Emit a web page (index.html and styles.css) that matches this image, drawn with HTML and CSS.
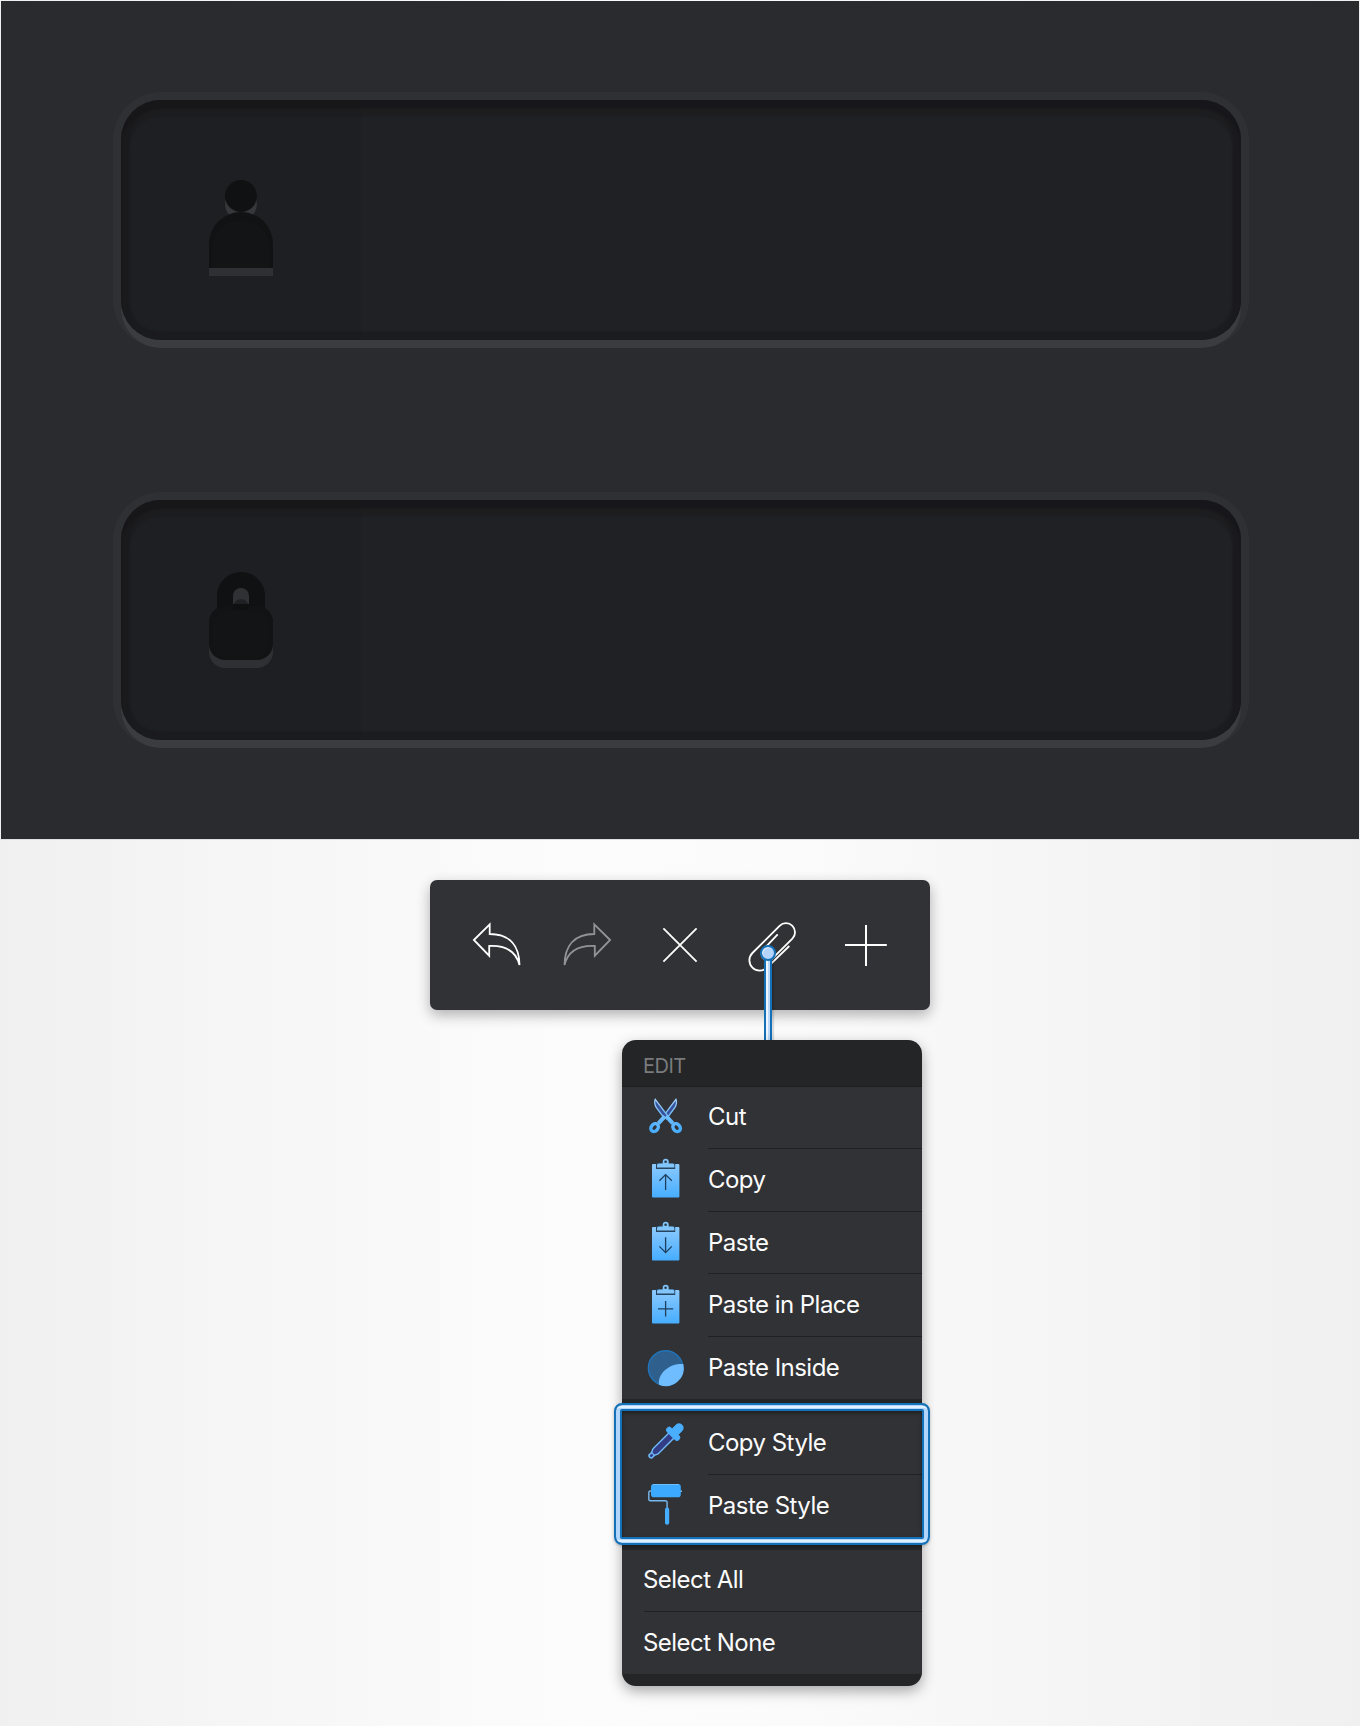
FILE: index.html
```html
<!DOCTYPE html>
<html lang="en">
<head>
<meta charset="utf-8">
<title>Edit menu</title>
<link rel="stylesheet" href="styles.css">
</head>
<body>
<svg class="defs" width="0" height="0" aria-hidden="true">
  <defs>
    <linearGradient id="sky" x1="0" y1="0" x2="0" y2="1"><stop offset="0" stop-color="#8ccaff"/><stop offset="1" stop-color="#46adff"/></linearGradient>
    <linearGradient id="cutfill" gradientUnits="userSpaceOnUse" x1="0" y1="11" x2="0" y2="46"><stop offset="0" stop-color="#a5d2fb"/><stop offset="1" stop-color="#43acff"/></linearGradient>
    <symbol id="board" viewBox="0 0 40 62">
      <rect x="6" y="15" width="27.4" height="33.6" rx="1" fill="url(#sky)"/>
      <path d="M10 14h19.2v6H10z" fill="#26445f"/>
      <path d="M11 18.6v-2.4q0-1.7 1.7-1.7h4v-1.7a3 3 0 0 1 6 0v1.7h4q1.7 0 1.7 1.7v2.4z" fill="#82c5fb"/>
      <circle cx="19.6" cy="12.8" r="1.3" fill="#26384a"/>
    </symbol>
  </defs>
</svg>
<main class="page">
  <section class="panel">
    <div class="field">
      <div class="field-icon">
        <svg width="80" height="240" viewBox="0 0 80 240">
          <circle cx="40" cy="104" r="16" fill="#36373a"/>
          <path d="M8 176v-28a32 32 0 0 1 64 0v28z" fill="#2f3033"/>
          <circle cx="40" cy="96" r="16" fill="#101113"/>
          <path d="M8 168v-24a32 32 0 0 1 64 0v24z" fill="#111214"/>
          <path d="M11 168v-21a29 27 0 0 1 58 0v21z" fill="#131416"/>
        </svg>
      </div>
    </div>
    <div class="field">
      <div class="field-icon">
        <svg width="80" height="240" viewBox="0 0 80 240">
          <rect x="8" y="114" width="64" height="54" rx="16" fill="#2f3033"/>
          <path d="M16 112V96a24 24 0 0 1 48 0v16z" fill="#101113"/>
          <rect x="8" y="106" width="64" height="54" rx="16" fill="#121315"/>
          <rect x="12" y="111" width="56" height="47" rx="14" fill="#131416"/>
          <path d="M32 104v-8a8 8 0 0 1 16 0v8z" fill="#303134"/>
          <path d="M33 104a7.5 7.5 0 0 1 14 0z" fill="#1f2023"/>
          <path d="M32 104h16v6H32z" fill="#0f1012"/>
        </svg>
      </div>
    </div>
  </section>

  <section class="stage">
    <div class="toolbar">
      <svg width="48" height="50" viewBox="0 0 48 50"><path d="M.9 20 16.7 4.3V14C37 14 46.2 26 46.5 45 43 31 33 25.2 16.2 26v9.7z"/></svg>
      <svg class="muted" width="48" height="50" viewBox="0 0 48 50"><path d="M47.1 20 31.3 4.3V14C11 14 1.8 26 1.5 45 5 31 15 25.2 31.8 26v9.7z"/></svg>
      <svg width="48" height="50" viewBox="0 0 48 50"><path d="m7.4 8.4 33.2 33.2M40.6 8.4 7.4 41.6"/></svg>
      <svg width="48" height="50" viewBox="0 0 48 50"><path d="M41.3 26 19 47.6A10.3 10.3 0 0 1 4.4 33L31.6 5.8a9 9 0 0 1 12.8 12.8L24 38.8a6.4 6.4 0 0 1-9-9L29.7 14.3"/></svg>
      <svg width="48" height="50" viewBox="0 0 48 50"><path class="plus" d="M24 5v41M3 25h41.8"/></svg>
      <div class="pointer"></div>
    </div>

    <div class="menu">
      <div class="menu-title">EDIT</div>
      <div class="group">
        <div class="item first">
          <svg width="40" height="62" viewBox="0 0 40 62" fill="none" stroke="url(#cutfill)">
            <path d="M30 12.4q1.5 3.6-1.2 8.2L20.6 31.6l-2.8-3.2z" fill="#37539b" stroke-width="1.3"/>
            <path d="M9.2 12.4q-1.5 3.6 1.2 8.2l8.2 11 2.8-3.2z" fill="#37539b" stroke-width="1.3"/>
            <path d="m18.8 29.4-6.4 7m8-7 6.4 7" stroke-width="4"/>
            <ellipse cx="8.6" cy="40.6" rx="3.3" ry="4.3" transform="rotate(42 8.6 40.6)" stroke-width="3.4"/>
            <ellipse cx="30.6" cy="40.6" rx="3.3" ry="4.3" transform="rotate(-42 30.6 40.6)" stroke-width="3.4"/>
          </svg><span>Cut</span>
        </div>
        <div class="item tall">
          <svg width="40" height="62" viewBox="0 0 40 62"><use href="#board"/><path class="mark" d="M19.6 41V25.8M13.4 31.8l6.2-6.2 6.2 6.2"/></svg><span>Copy</span>
        </div>
        <div class="item">
          <svg width="40" height="62" viewBox="0 0 40 62"><use href="#board"/><path class="mark" d="M19.6 25.3v15.2M13.4 34.4l6.2 6.2 6.2-6.2"/></svg><span>Paste</span>
        </div>
        <div class="item tall">
          <svg width="40" height="63" viewBox="0 -.5 40 62"><use href="#board" width="40" height="62"/><path class="mark" d="M19.6 26v15.6M12 33.8h15.2"/></svg><span>Paste in Place</span>
        </div>
        <div class="item last">
          <svg width="40" height="62" viewBox="0 0 40 62">
            <circle cx="19.6" cy="31" r="17.2" fill="#2f5f8c" stroke="#2273b7" stroke-width="1.5"/>
            <path d="M37.4 27.2A18 18 0 0 1 13 47.7C11 37 24 25.5 37.4 27.2z" fill="#6fbcff"/>
          </svg><span>Paste Inside</span>
        </div>
      </div>
      <div class="group spaced">
        <div class="item taller">
          <svg width="40" height="62" viewBox="0 0 40 62">
            <g transform="translate(19.2 30.7) rotate(45)">
              <path d="M-3.6-9.5h7.2v23.2L2 17.3V21q-2 2-4 0v-3.7l-1.6-3.6z" fill="#323d86" stroke="#6fb9f8" stroke-width="1.5"/>
              <path d="M-2 17.3h4" stroke="#6fb9f8" stroke-width="1.3"/>
              <path d="M-3.4-8.3h-2a2.9 2.9 0 0 1 0-5.8h1.2v-5.4a4.2 4.2 0 0 1 8.4 0v5.4h1.2a2.9 2.9 0 0 1 0 5.8z" fill="#4aaeff" stroke="#4aaeff" stroke-width=".8"/>
            </g>
          </svg><span>Copy Style</span>
        </div>
        <div class="item last">
          <svg width="40" height="62" viewBox="0 0 40 62">
            <path d="M5 16H4.3Q2.8 16 2.8 17.5v6.4q0 1.8 1.8 1.8h14.6q1.9 0 1.9 1.9V33M34 16.2h2" fill="none" stroke="#79b8ed" stroke-width="1.4"/>
            <rect x="5" y="9" width="29.8" height="13.2" rx="2.8" fill="#3baaff"/>
            <path d="M7 9.5h26" stroke="#6cbfff"/>
            <rect x="19" y="32.4" width="4.2" height="17.4" rx="2.1" fill="#45adff"/>
          </svg><span>Paste Style</span>
        </div>
        <div class="focus"></div>
      </div>
      <div class="group plain">
        <div class="item first"><span>Select All</span></div>
        <div class="item last"><span>Select None</span></div>
      </div>
    </div>
  </section>
</main>
</body>
</html>
```

FILE: styles.css
```css
*, *::before, *::after { box-sizing: border-box; }
body { margin: 0; font-family: Inter, "Liberation Sans", sans-serif; }
.defs { display: block; height: 0; }
.page {
  width: 1360px;
  height: 1726px;
  padding: 1px 1px 0;
  overflow: hidden;
  background: linear-gradient(90deg, #f0f0f0 0, #f6f6f6 18%, #fcfcfc 42%, #fbfbfb 58%, #f5f5f5 78%, #f0f0f0 100%);
}
.panel {
  height: 838px;
  padding: 99px 118px 0 120px;
  display: flex;
  flex-direction: column;
  gap: 160px;
  background: #2a2b2e;
}
.field {
  width: 1120px;
  height: 240px;
  border-radius: 40px;
  background: linear-gradient(90deg, #1e1f22 240px, #202124 240px);
  box-shadow:
    inset 0 8px 2px rgba(20, 21, 24, .45),
    inset 0 0 2px 8px rgba(23, 24, 27, .5),
    inset 0 8px 2px 8px rgba(24, 25, 28, .4),
    0 8px 0 #3b3c3f,
    0 0 0 8px #2f3033;
}
.field-icon { width: 240px; padding-left: 80px; }
.field-icon svg { display: block; }

.stage {
  margin: 0 -1px;
  padding-top: 40px;
  border-top: 1px solid #dedfe2;
  display: flex;
  flex-direction: column;
  gap: 30px;
}
.toolbar {
  position: relative;
  width: 500px;
  height: 130px;
  margin-left: 430px;
  padding: 40px 0 0 43px;
  display: grid;
  grid-template-columns: 90px 93px 92px 94px 48px;
  align-items: start;
  border-radius: 7px;
  background: #313235;
  box-shadow: 0 5px 14px rgba(0, 0, 0, .3);
}
.toolbar svg { display: block; overflow: visible; fill: none; stroke: #fff; stroke-width: 1.8; }
.toolbar .muted { stroke: #929395; }
.toolbar .plus { stroke-width: 2; }
/* Callout line from the clip button down to the menu */
.pointer {
  position: absolute;
  left: 334px;
  top: 73px;
  width: 8px;
  height: 87px;
  border: solid #1470b7;
  border-width: 0 2px;
  background: linear-gradient(90deg, #eef6ff 2px, #bcd9fa 2px);
  box-shadow: 2px 0 1px rgba(0, 0, 0, .12);
}
.pointer::before {
  content: "";
  position: absolute;
  left: -6px;
  top: -8px;
  width: 16px;
  height: 16px;
  border: 2px solid #1470b7;
  border-radius: 50%;
  background: #b5d4fb;
  box-shadow: inset 1px 1px 0 #e4f0ff;
}
.menu {
  position: relative;
  width: 300px;
  height: 646px;
  margin-left: 622px;
  border-radius: 14px;
  background: #242527;
  box-shadow: 0 5px 14px rgba(0, 0, 0, .34);
}
.menu-title {
  height: 47px;
  padding: 0 21px;
  border-bottom: 1px solid #1d1e20;
  color: #7b7b7d;
  font-size: 20px;
  line-height: 52px;
  letter-spacing: -.5px;
}
.group { position: relative; background: #313235; }
.spaced { margin: 12px 0 13px; }
.item {
  position: relative;
  height: 62px;
  padding-left: 24px;
  display: flex;
  gap: 22px;
  color: #fbfbfc;
  font-size: 24px;
  line-height: 62px;
  letter-spacing: -.53px;
  white-space: nowrap;
}
.item svg { display: block; flex: none; }
.item.first { line-height: 60px; }
.item.tall { height: 63px; }
.item.taller { height: 64px; line-height: 64px; }
.item::after {
  content: "";
  position: absolute;
  left: 86px;
  right: 0;
  bottom: 0;
  height: 1px;
  background: #202123;
}
.item.last::after { display: none; }
.plain .item { padding-left: 21px; }
.plain .item::after { left: 22px; }
.mark { fill: none; stroke: #1f3f5c; stroke-width: 1.3; }
/* Ring around the style commands */
.focus {
  position: absolute;
  left: -8px;
  top: -8px;
  width: 316px;
  height: 142px;
  border: 2px solid #1470b7;
  border-radius: 8px;
  box-shadow: inset 0 0 0 4px #b2d5fb, inset 0 0 0 6px #1470b7, inset 0 2px 4px 6px rgba(0, 0, 0, .4), 0 1px 3px rgba(0, 0, 0, .25);
}
.focus::after {
  content: "";
  position: absolute;
  inset: 1px;
  border: solid #e1f2ff;
  border-width: 2px 0;
  border-radius: 4px;
}
```
